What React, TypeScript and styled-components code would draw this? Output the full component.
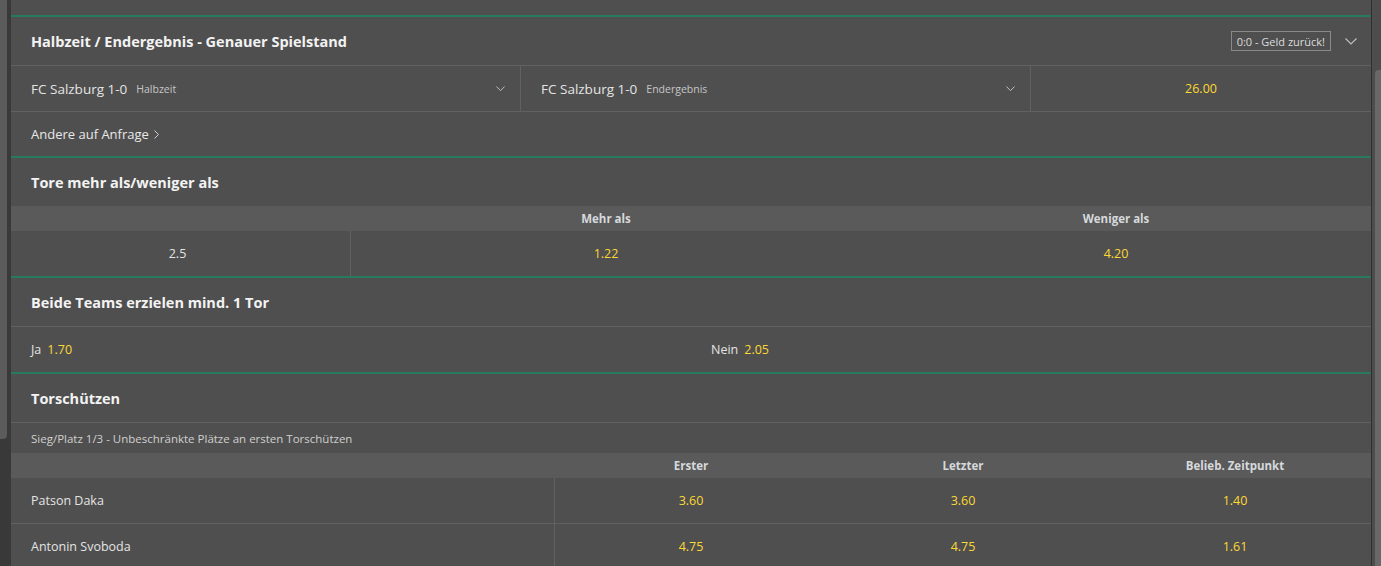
import React from 'react';
import styled, { createGlobalStyle } from 'styled-components';

const GlobalStyle = createGlobalStyle`
  html, body {
    margin: 0;
    padding: 0;
    background: #4f4f4f;
    overflow: hidden;
  }
  body {
    font-family: 'Open Sans', 'Noto Sans', sans-serif;
    color: #e4e4e4;
  }
`;

const Frame = styled.div`
  display: flex;
  height: 566px;
  overflow: hidden;
`;

const LeftRail = styled.div`
  width: 11px;
  flex: none;
  display: flex;
  flex-direction: column;
  background: #393939;
`;

const LeftThumb = styled.div`
  width: 7px;
  height: 439px;
  flex: none;
  background: #5b5b5b;
  border-radius: 0 0 4px 0;
`;

const RightRail = styled.div`
  width: 9px;
  flex: none;
  border-left: 1px solid #2f2f2f;
  background: #4d4d4d;
  padding-top: 70px;
  display: flex;
  justify-content: flex-end;
`;

const RightThumb = styled.div`
  width: 6px;
  height: 100%;
  background: #686868;
  border-radius: 4px 0 0 0;
`;

const Content = styled.div`
  flex: 1;
  min-width: 0;
  overflow: hidden;
`;

const Tail = styled.div`
  height: 15px;
`;

const Section = styled.section`
  border-top: 2px solid #277a5c;
`;

const Title = styled.div<{ $divided?: boolean }>`
  height: 48px;
  display: flex;
  align-items: center;
  padding: 0 14px 0 20px;
  font-size: 14.5px;
  font-weight: 700;
  color: #f3f3f3;
  border-bottom: ${(p) => (p.$divided ? '1px solid #616161' : 'none')};
`;

const TitleText = styled.span`
  flex: 1;
`;

const Badge = styled.span`
  height: 18px;
  display: flex;
  align-items: center;
  padding: 0 5px;
  border: 1px solid #8a8a8a;
  font-size: 11px;
  font-weight: 400;
  color: #dcdcdc;
  margin-right: 14px;
`;

const Row = styled.div<{ $cols: string; $height?: number; $divided?: boolean }>`
  display: grid;
  grid-template-columns: ${(p) => p.$cols};
  height: ${(p) => p.$height ?? 45}px;
  border-bottom: ${(p) => (p.$divided ? '1px solid #616161' : 'none')};
`;

const Cell = styled.div<{ $center?: boolean; $line?: boolean }>`
  display: flex;
  align-items: center;
  justify-content: ${(p) => (p.$center ? 'center' : 'flex-start')};
  padding: 0 20px;
  font-size: 13px;
  color: #e4e4e4;
  border-right: ${(p) => (p.$line ? '1px solid #616161' : 'none')};
  min-width: 0;
  white-space: nowrap;
`;

const SelectCell = styled(Cell)`
  padding-right: 15px;
`;

const Team = styled.span`
  font-size: 13.5px;
  color: #e4e4e4;
`;

const Hint = styled.span`
  font-size: 10.5px;
  color: #c6c6c6;
  margin-left: 9px;
  flex: 1;
`;

const Odd = styled.span`
  color: #fdd835;
  font-size: 12.5px;
`;

const Pick = styled.span`
  font-size: 12.5px;
  color: #e4e4e4;
  margin-right: 6px;
`;

const HeadBand = styled.div<{ $cols: string }>`
  display: grid;
  grid-template-columns: ${(p) => p.$cols};
  height: 25px;
  background: #5a5a5a;
`;

const HeadCell = styled.div`
  display: flex;
  align-items: center;
  justify-content: center;
  font-size: 11.5px;
  font-weight: 700;
  color: #d6d9dc;
`;

const Subline = styled.div`
  height: 30px;
  display: flex;
  align-items: center;
  padding: 0 20px;
  font-size: 11.5px;
  color: #cfcfcf;
`;

const LinkRow = styled.div`
  height: 44px;
  display: flex;
  align-items: center;
  padding: 0 20px;
  font-size: 13px;
  color: #e8e8e8;
  gap: 5px;
`;

const Chevron = ({ size = 9, color = '#cfcfcf' }: { size?: number; color?: string }) => (
  <svg width={size} height={size / 2 + 1} viewBox="0 0 12 7" fill="none">
    <path d="M0.5 0.5 L6 6 L11.5 0.5" stroke={color} strokeWidth="1.2" />
  </svg>
);

const ChevronRight = () => (
  <svg width="5" height="9" viewBox="0 0 5 9" fill="none">
    <path d="M0.5 0.5 L4.5 4.5 L0.5 8.5" stroke="#d0d0d0" strokeWidth="1" />
  </svg>
);

const scorers = [
  { name: 'Patson Daka', odds: ['3.60', '3.60', '1.40'] },
  { name: 'Antonin Svoboda', odds: ['4.75', '4.75', '1.61'] },
];

const scorerCols = '40% 1fr 1fr 1fr';
const overCols = '25% 1fr 1fr';

export default function App() {
  return (
    <>
      <GlobalStyle />
      <Frame>
        <LeftRail>
          <LeftThumb />
        </LeftRail>
        <Content>
          <Tail />

          <Section>
            <Title $divided>
              <TitleText>Halbzeit / Endergebnis - Genauer Spielstand</TitleText>
              <Badge>0:0 - Geld zurück!</Badge>
              <Chevron size={12} color="#bdbdbd" />
            </Title>
            <Row $cols="37.5% 37.5% 25%" $divided>
              <SelectCell $line>
                <Team>FC Salzburg 1-0</Team>
                <Hint>Halbzeit</Hint>
                <Chevron />
              </SelectCell>
              <SelectCell $line>
                <Team>FC Salzburg 1-0</Team>
                <Hint>Endergebnis</Hint>
                <Chevron />
              </SelectCell>
              <Cell $center>
                <Odd>26.00</Odd>
              </Cell>
            </Row>
            <LinkRow>
              Andere auf Anfrage <ChevronRight />
            </LinkRow>
          </Section>

          <Section>
            <Title>Tore mehr als/weniger als</Title>
            <HeadBand $cols={overCols}>
              <HeadCell />
              <HeadCell>Mehr als</HeadCell>
              <HeadCell>Weniger als</HeadCell>
            </HeadBand>
            <Row $cols={overCols}>
              <Cell $center $line>
                <Pick>2.5</Pick>
              </Cell>
              <Cell $center>
                <Odd>1.22</Odd>
              </Cell>
              <Cell $center>
                <Odd>4.20</Odd>
              </Cell>
            </Row>
          </Section>

          <Section>
            <Title $divided>Beide Teams erzielen mind. 1 Tor</Title>
            <Row $cols="1fr 1fr">
              <Cell>
                <Pick>Ja</Pick>
                <Odd>1.70</Odd>
              </Cell>
              <Cell>
                <Pick>Nein</Pick>
                <Odd>2.05</Odd>
              </Cell>
            </Row>
          </Section>

          <Section>
            <Title $divided>Torschützen</Title>
            <Subline>Sieg/Platz 1/3 - Unbeschränkte Plätze an ersten Torschützen</Subline>
            <HeadBand $cols={scorerCols}>
              <HeadCell />
              <HeadCell>Erster</HeadCell>
              <HeadCell>Letzter</HeadCell>
              <HeadCell>Belieb. Zeitpunkt</HeadCell>
            </HeadBand>
            {scorers.map((s) => (
              <Row key={s.name} $cols={scorerCols} $divided>
                <Cell $line>
                  <Pick>{s.name}</Pick>
                </Cell>
                {s.odds.map((o, i) => (
                  <Cell key={i} $center>
                    <Odd>{o}</Odd>
                  </Cell>
                ))}
              </Row>
            ))}
          </Section>
        </Content>
        <RightRail>
          <RightThumb />
        </RightRail>
      </Frame>
    </>
  );
}
